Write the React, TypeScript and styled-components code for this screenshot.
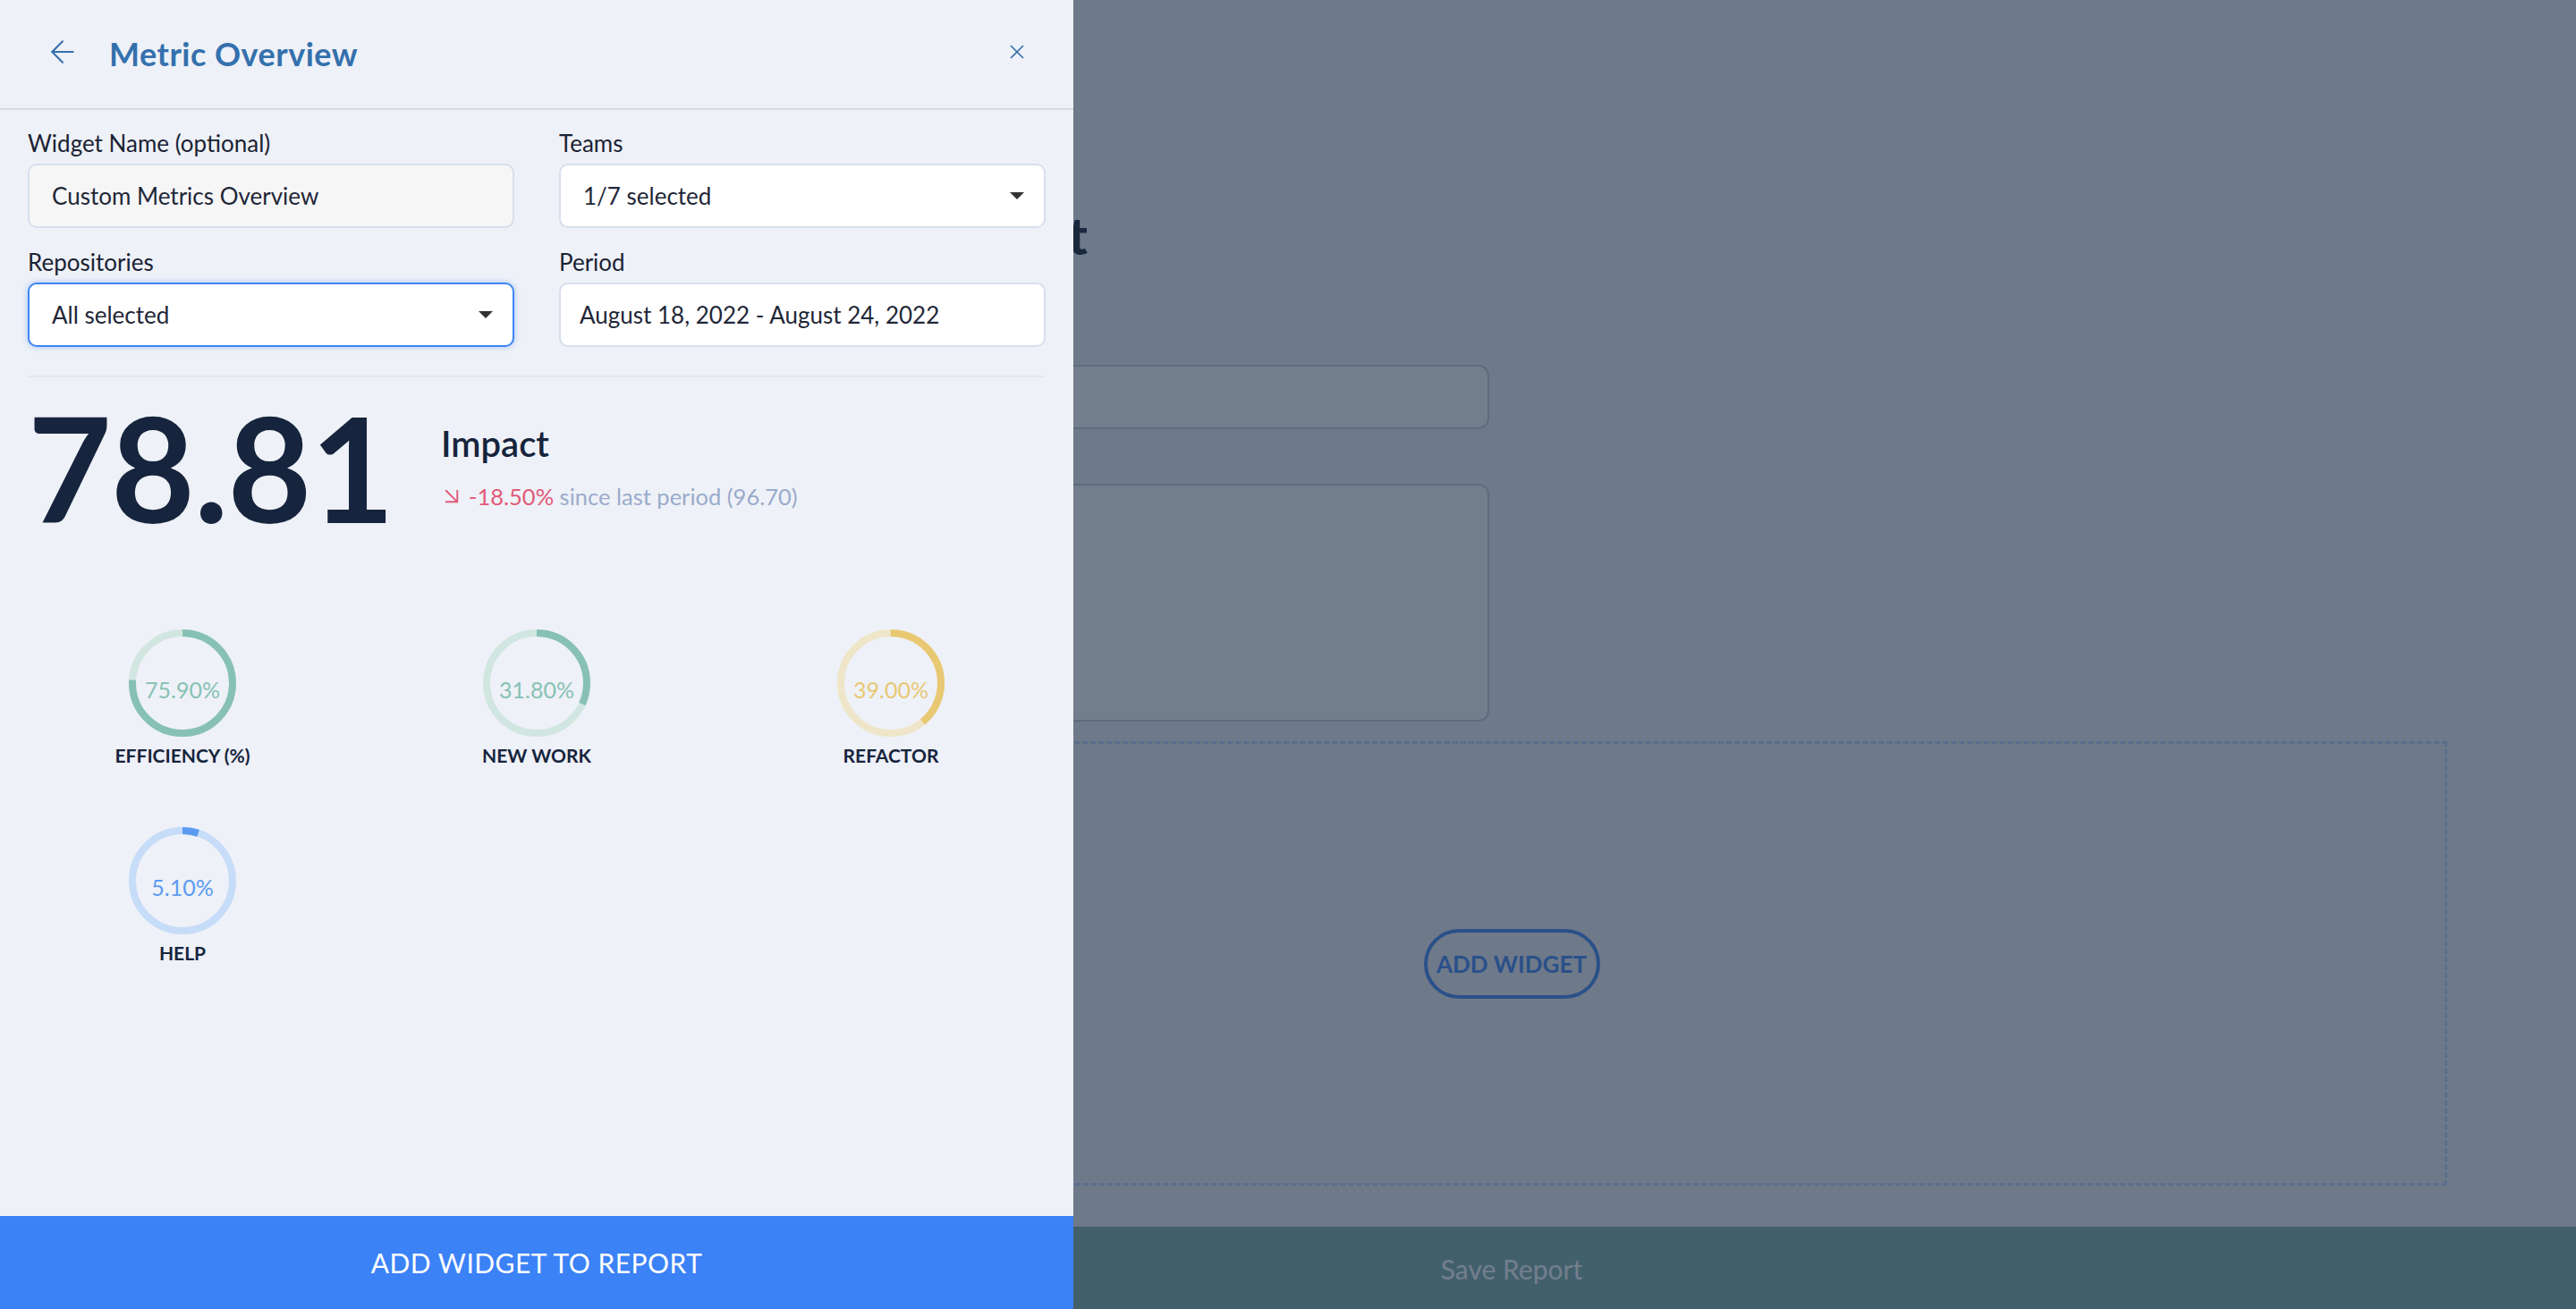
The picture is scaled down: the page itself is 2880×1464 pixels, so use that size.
import React from "react"
import styled, { createGlobalStyle } from "styled-components"
import { ArrowLeft, ArrowDownRight, X } from "lucide-react"

const GlobalStyle = createGlobalStyle`
  * { box-sizing: border-box; }
  html, body { margin: 0; padding: 0; }
  body {
    font-family: Lato, "Open Sans", "Liberation Sans", sans-serif;
    background: #f2f2f4;
    color: #16243d;
    overflow: hidden;
  }
`

interface IMetric {
    label: string,
    value: number,
    color: string,
    track: string,
}

const metrics: IMetric[] = [
    { label: "EFFICIENCY (%)", value: 75.9, color: "#87c1b5", track: "#d2e6e1" },
    { label: "NEW WORK", value: 31.8, color: "#87c1b5", track: "#d2e6e1" },
    { label: "REFACTOR", value: 39.0, color: "#e9c873", track: "#efe6c9" },
    { label: "HELP", value: 5.1, color: "#5b9cf2", track: "#c6dcf8" },
]

const Donut = ({ metric }: { metric: IMetric }) => {
    const r = 56
    const c = 2 * Math.PI * r
    const filled = (metric.value / 100) * c
    return (
        <Ring>
            <svg width="120" height="120" viewBox="0 0 120 120">
                <circle cx="60" cy="60" r={r} fill="none" stroke={metric.track} strokeWidth="8" />
                <circle
                    cx="60"
                    cy="60"
                    r={r}
                    fill="none"
                    stroke={metric.color}
                    strokeWidth="8"
                    strokeDasharray={`${filled} ${c}`}
                    transform="rotate(-90 60 60)"
                />
            </svg>
            <RingValue $color={metric.color}>{metric.value.toFixed(2)}%</RingValue>
        </Ring>
    )
}

export default function App() {
    return (
        <>
            <GlobalStyle />
            <Page>
                <Sidebar />
                <Main>
                    <Content>
                        <TitleBox>
                            <PageTitle>New Report</PageTitle>
                        </TitleBox>
                        <TextBox $top={112} />
                        <TextArea $top={61} />
                        <DropZone>
                            <PillButton>ADD WIDGET</PillButton>
                        </DropZone>
                    </Content>
                    <SaveBar>Save Report</SaveBar>
                </Main>
            </Page>
            <Overlay />
            <Drawer>
                <DrawerHeader>
                    <IconButton>
                        <ArrowLeft size={40} strokeWidth={1.25} />
                    </IconButton>
                    <DrawerTitle>Metric Overview</DrawerTitle>
                    <IconButton>
                        <X size={26} strokeWidth={1.6} />
                    </IconButton>
                </DrawerHeader>

                <FormGrid>
                    <Field>
                        <Label>Widget Name (optional)</Label>
                        <Input $muted>Custom Metrics Overview</Input>
                    </Field>
                    <Field>
                        <Label>Teams</Label>
                        <Input>
                            1/7 selected
                            <Caret />
                        </Input>
                    </Field>
                    <Field>
                        <Label>Repositories</Label>
                        <Input $focused>
                            All selected
                            <Caret />
                        </Input>
                    </Field>
                    <Field>
                        <Label>Period</Label>
                        <Input $pad={21}>August 18, 2022 - August 24, 2022</Input>
                    </Field>
                </FormGrid>

                <Divider />

                <ScoreRow>
                    <BigNumber>78.81</BigNumber>
                    <ScoreInfo>
                        <ScoreTitle>Impact</ScoreTitle>
                        <Trend>
                            <TrendIcon>
                                <ArrowDownRight size={30} strokeWidth={1.5} />
                            </TrendIcon>
                            <TrendValue>-18.50%</TrendValue> since last period (96.70)
                        </Trend>
                    </ScoreInfo>
                </ScoreRow>

                <RingGrid>
                    {metrics.map((m) => (
                        <RingCell key={m.label}>
                            <Donut metric={m} />
                            <RingLabel>{m.label}</RingLabel>
                        </RingCell>
                    ))}
                </RingGrid>

                <SubmitButton>ADD WIDGET TO REPORT</SubmitButton>
            </Drawer>
        </>
    )
}

/* background page */

const Page = styled.div`
    display: grid;
    grid-template-columns: 500px 1fr;
    height: 100vh;
`

const Sidebar = styled.aside`
    background: #ffffff;
`

const Main = styled.main`
    display: flex;
    flex-direction: column;
`

const Content = styled.div`
    flex: 1;
    padding: 230px 144px 0 144px;
    display: flex;
    flex-direction: column;
`

const TitleBox = styled.div`
    width: 572px;
    text-align: right;
`

const PageTitle = styled.h1`
    margin: 0;
    font-size: 58px;
    line-height: 66px;
    font-weight: 900;
    white-space: nowrap;
    color: #0f172a;
`

const TextBox = styled.div<{ $top: number }>`
    margin-top: ${(p) => p.$top}px;
    width: 1021px;
    height: 72px;
    background: #ffffff;
    border: 2px solid #c9ccd6;
    border-radius: 12px;
`

const TextArea = styled(TextBox)`
    height: 266px;
`

const DropZone = styled.div`
    margin-top: 22px;
    height: 497px;
    border: 3px dashed #bcd3ff;
    display: flex;
    align-items: center;
    justify-content: center;
`

const PillButton = styled.button`
    width: 197px;
    height: 78px;
    border: 4px solid #3b82f6;
    border-radius: 40px;
    background: transparent;
    color: #3b82f6;
    font-family: Lato, "Liberation Sans", sans-serif;
    font-size: 26px;
    font-weight: 700;
    padding: 0;
`

const SaveBar = styled.div`
    margin-top: 46px;
    height: 93px;
    background: #78afa3;
    color: #ffffff;
    font-size: 30px;
    display: flex;
    align-items: center;
    justify-content: center;
`

const Overlay = styled.div`
    position: fixed;
    inset: 0;
    background: rgba(34, 51, 74, 0.63);
`

/* drawer */

const Drawer = styled.section`
    position: fixed;
    top: 0;
    left: 0;
    bottom: 0;
    width: 1200px;
    background: #eef1f7;
    display: flex;
    flex-direction: column;
`

const DrawerHeader = styled.header`
    height: 123px;
    border-bottom: 2px solid #d8dce2;
    display: flex;
    align-items: center;
    padding: 0 50px 6px 50px;
`

const IconButton = styled.span`
    display: flex;
    color: #3470ad;
`

const DrawerTitle = styled.h2`
    margin: 4px 0 0 32px;
    font-size: 36px;
    font-weight: 700;
    letter-spacing: 0.5px;
    color: #3470ad;
    flex: 1;
`

const FormGrid = styled.div`
    display: grid;
    grid-template-columns: 1fr 1fr;
    column-gap: 50px;
    row-gap: 22px;
    padding: 21px 31px 0 31px;
`

const Field = styled.div`
    display: flex;
    flex-direction: column;
`

const Label = styled.label`
    font-size: 26px;
    line-height: 32px;
    margin-bottom: 7px;
    color: #1a2234;
`

const Input = styled.div<{ $muted?: boolean, $focused?: boolean, $pad?: number }>`
    height: 72px;
    display: flex;
    align-items: center;
    justify-content: space-between;
    padding: 0 22px 0 ${(p) => p.$pad ?? 25}px;
    font-size: 26px;
    color: #1f2737;
    background: ${(p) => (p.$muted ? "#f6f6f7" : "#ffffff")};
    border: 2px solid ${(p) => (p.$focused ? "#3f86f4" : "#d7dfec")};
    border-radius: 10px;
    box-shadow: ${(p) => (p.$focused ? "0 0 6px rgba(63, 134, 244, 0.45)" : "none")};
`

const Caret = styled.span`
    width: 0;
    height: 0;
    border-left: 8px solid transparent;
    border-right: 8px solid transparent;
    border-top: 8px solid #333333;
`

const Divider = styled.hr`
    margin: 32px 31px 0 31px;
    border: none;
    border-top: 2px solid #e2e8f1;
`

const ScoreRow = styled.div`
    display: flex;
    align-items: flex-start;
    padding: 0 31px;
    margin-top: 21px;
`

const BigNumber = styled.div`
    font-size: 162px;
    line-height: 160px;
    font-weight: 700;
    letter-spacing: -1px;
    color: #16243d;
    width: 462px;
`

const ScoreInfo = styled.div`
    display: flex;
    flex-direction: column;
    padding-top: 29px;
`

const ScoreTitle = styled.div`
    font-size: 40px;
    line-height: 48px;
    font-weight: 600;
    color: #16243d;
`

const Trend = styled.div`
    margin-top: 20px;
    display: flex;
    align-items: center;
    white-space: pre;
    font-size: 25.5px;
    line-height: 30px;
    color: #9aabcb;
`

const TrendIcon = styled.span`
    display: flex;
    margin: 0 4px 0 -3px;
    color: #e05a78;
`

const TrendValue = styled.span`
    color: #e05a78;
`

const RingGrid = styled.div`
    display: grid;
    grid-template-columns: repeat(3, 396px);
    justify-content: center;
    row-gap: 68px;
    margin-top: 101px;
`

const RingCell = styled.div`
    display: flex;
    flex-direction: column;
    align-items: center;
    gap: 9px;
`

const Ring = styled.div`
    position: relative;
    width: 120px;
    height: 120px;
    display: flex;
    align-items: center;
    justify-content: center;
    svg {
        position: absolute;
        inset: 0;
    }
`

const RingValue = styled.span<{ $color: string }>`
    position: relative;
    margin-top: 14px;
    font-size: 25px;
    color: ${(p) => p.$color};
`

const RingLabel = styled.div`
    font-size: 21px;
    line-height: 24px;
    font-weight: 700;
    color: #16243d;
`

const SubmitButton = styled.button`
    margin-top: auto;
    height: 104px;
    border: none;
    background: #3b82f6;
    color: #ffffff;
    font-family: Lato, "Liberation Sans", sans-serif;
    font-size: 30px;
    letter-spacing: 0.5px;
    cursor: pointer;
`
